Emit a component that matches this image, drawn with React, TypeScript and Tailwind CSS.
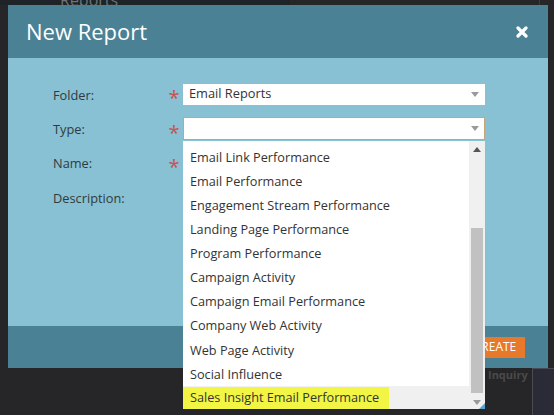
import React from 'react';

const items = [
  'Email Link Performance',
  'Email Performance',
  'Engagement Stream Performance',
  'Landing Page Performance',
  'Program Performance',
  'Campaign Activity',
  'Campaign Email Performance',
  'Company Web Activity',
  'Web Page Activity',
  'Social Influence',
];

const Caret = ({ up = false }: { up?: boolean }) => (
  <svg width="8" height="5" viewBox="0 0 8 5" className="block">
    {up ? <path d="M0 5 L4 0 L8 5 Z" fill="#555" /> : <path d="M0 0 L8 0 L4 5 Z" fill="#9a9a9a" />}
  </svg>
);

const Label = ({ text }: { text: string }) => (
  <div className="flex h-[34.4px] items-center text-[12.8px] text-[#2f3b40]">{text}</div>
);

const Star = () => (
  <div className="flex h-[34.4px] items-center justify-center text-[20px] leading-none text-[#c4554f]">
    <span className="mt-[6px]">*</span>
  </div>
);

export default function App() {
  return (
    <div
      className="relative h-[415px] w-[554px] overflow-hidden bg-[#262628]"
      style={{ fontFamily: '"Open Sans", "Liberation Sans", sans-serif' }}
    >
      {/* page behind the modal */}
      <div className="absolute left-0 top-0 h-[5px] w-[290px] bg-[#1d2326]" />
      <div className="absolute left-[60px] top-[-12px] text-[16px] text-[#6b7378]">Reports</div>
      <div className="absolute right-[14px] top-0 h-[415px] w-[1px] bg-[#3a3d44]" />
      <div className="absolute left-[532px] top-[368px] h-[47px] w-[22px] border-l border-t border-[#4a4a55] bg-[#2b2b38]" />
      <div className="absolute left-[488px] top-[367px] text-[11px] font-bold text-[#4a4a4a]">Inquiry</div>

      {/* modal */}
      <div className="absolute left-[8px] top-[5px] flex w-[540px] flex-col">
        <div className="flex h-[53px] items-center justify-between bg-[#4a8194] pl-[18px] pr-[20px]">
          <span className="text-[22px] text-white">New Report</span>
          <svg width="12" height="12" viewBox="0 0 12 12">
            <path d="M2 2 L10 10 M10 2 L2 10" stroke="#fff" strokeWidth="3.2" strokeLinecap="round" />
          </svg>
        </div>
        <div className="flex h-[268px] bg-[#88c1d3] pl-[45px] pt-[20px]">
          <div className="w-[112px]">
            <Label text="Folder:" />
            <Label text="Type:" />
            <Label text="Name:" />
            <Label text="Description:" />
          </div>
          <div className="w-[18px]">
            <Star />
            <Star />
            <Star />
          </div>
          <div className="-mt-[1px] flex w-[302px] flex-col">
            <div className="flex h-[34px] items-center">
              <div className="flex h-[21px] w-full items-center justify-between bg-white pl-[6px] pr-[6px] text-[12.8px] text-[#333]">
                <span>Email Reports</span>
                <Caret />
              </div>
            </div>
            <div className="flex h-[34px] items-center">
              <div className="flex h-[23px] w-full items-center justify-end border border-[#c9a576] bg-white pr-[5px]">
                <Caret />
              </div>
            </div>
          </div>
        </div>
        <div className="flex h-[42px] items-center justify-end bg-[#4a8194] pr-[23px]">
          <div className="flex h-[21px] w-[60px] items-center justify-center bg-[#e8792a] text-[12px] text-white">
            CREATE
          </div>
        </div>
      </div>

      {/* open dropdown list */}
      <div className="absolute left-[183px] top-[141px] flex h-[268px] w-[302px] bg-white">
        <div className="flex flex-1 flex-col pt-[4px]">
          {items.map((t) => (
            <div key={t} className="flex h-[24.4px] items-center pl-[7px] text-[12.7px] text-[#333]">
              {t}
            </div>
          ))}
          <div className="flex h-[23px] items-center bg-[#f0f0f0]">
            <span className="flex h-[22px] items-center bg-[#f3f545] pl-[7px] pr-[10px] text-[12.7px] text-[#333]">
              Sales Insight Email Performance
            </span>
          </div>
        </div>
        <div className="relative flex w-[16px] flex-col items-center bg-[#f0f0f0]">
          <div className="flex h-[16px] items-center">
            <Caret up />
          </div>
          <div className="mt-[71px] h-[165px] w-[12px] bg-[#c1c1c1]" />
          <div className="mt-[4px] flex h-[10px] items-center">
            <Caret />
          </div>
          <div className="absolute bottom-0 right-0 h-0 w-0 border-b-[6px] border-l-[6px] border-b-[#5aa3cf] border-l-transparent" />
        </div>
      </div>
    </div>
  );
}
